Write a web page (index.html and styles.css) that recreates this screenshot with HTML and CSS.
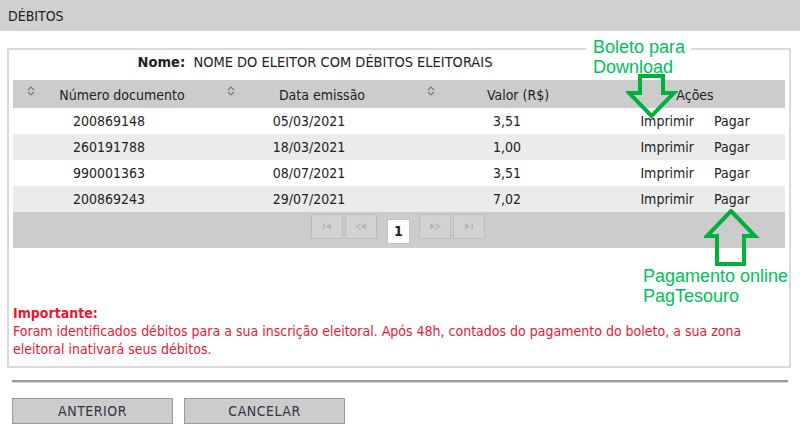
FILE: index.html
```html
<!DOCTYPE html>
<html lang="pt-BR">
<head>
<meta charset="utf-8">
<title>Débitos</title>
<link rel="stylesheet" href="styles.css">
</head>
<body>
<div class="page">
  <div class="titlebar">DÉBITOS</div>

  <div class="panel">
    <div class="nome"><b>Nome:</b>&nbsp; NOME DO ELEITOR COM DÉBITOS ELEITORAIS</div>

    <div class="grid">
      <div class="th"><span class="sort"><svg width="8" height="10" viewBox="0 0 8 10"><path d="M1 4 L4 1 L7 4 M1 6 L4 9 L7 6" fill="none" stroke="#7a7a7a" stroke-width="1.2"/></svg></span><span class="lbl">Número documento</span></div>
      <div class="th"><span class="sort"><svg width="8" height="10" viewBox="0 0 8 10"><path d="M1 4 L4 1 L7 4 M1 6 L4 9 L7 6" fill="none" stroke="#7a7a7a" stroke-width="1.2"/></svg></span><span class="lbl">Data emissão</span></div>
      <div class="th"><span class="sort"><svg width="8" height="10" viewBox="0 0 8 10"><path d="M1 4 L4 1 L7 4 M1 6 L4 9 L7 6" fill="none" stroke="#7a7a7a" stroke-width="1.2"/></svg></span><span class="lbl lbl3">Valor (R$)</span></div>
      <div class="th th-act"><span class="lbl">Ações</span></div>

      <div class="td">200869148</div><div class="td">05/03/2021</div><div class="td">3,51</div><div class="td act"><span>Imprimir</span><span>Pagar</span></div>
      <div class="td alt">260191788</div><div class="td alt">18/03/2021</div><div class="td alt">1,00</div><div class="td act alt"><span>Imprimir</span><span>Pagar</span></div>
      <div class="td">990001363</div><div class="td">08/07/2021</div><div class="td">3,51</div><div class="td act"><span>Imprimir</span><span>Pagar</span></div>
      <div class="td alt">200869243</div><div class="td alt">29/07/2021</div><div class="td alt">7,02</div><div class="td act alt"><span>Imprimir</span><span>Pagar</span></div>
    </div>

    <div class="pager">
      <span class="pbtn"><svg width="10" height="7" viewBox="0 0 10 7"><rect x="1" y="0.5" width="1.4" height="6" fill="#b4b4b4"/><path d="M9 0.5 L3.5 3.5 L9 6.5Z" fill="#b4b4b4"/></svg></span>
      <span class="pbtn"><svg width="12" height="7" viewBox="0 0 12 7"><path d="M6 0.5 L1 3.5 L6 6.5" fill="none" stroke="#b4b4b4" stroke-width="1.2"/><path d="M11 0.5 L5.5 3.5 L11 6.5Z" fill="#b4b4b4"/></svg></span>
      <span class="pnum">1</span>
      <span class="pbtn"><svg width="12" height="7" viewBox="0 0 12 7"><path d="M1 0.5 L6.5 3.5 L1 6.5Z" fill="#b4b4b4"/><path d="M6 0.5 L11 3.5 L6 6.5" fill="none" stroke="#b4b4b4" stroke-width="1.2"/></svg></span>
      <span class="pbtn"><svg width="10" height="7" viewBox="0 0 10 7"><path d="M1 0.5 L6.5 3.5 L1 6.5Z" fill="#b4b4b4"/><rect x="7.6" y="0.5" width="1.4" height="6" fill="#b4b4b4"/></svg></span>
    </div>

    <div class="aviso">
      <div class="aviso-t">Importante:</div>
      <div>Foram identificados débitos para a sua inscrição eleitoral. Após 48h, contados do pagamento do boleto, a sua zona eleitoral inativará seus débitos.</div>
    </div>

    <div class="note note-top">Boleto para<br>Download</div>
    <svg class="arrow arrow-down" width="52" height="46" viewBox="0 0 52 46"><path d="M14 2 L37 2 L37 19 L48 19 L25.5 42 L3 19 L14 19 Z" fill="none" stroke="#00b03c" stroke-width="4" stroke-linejoin="miter"/></svg>
    <svg class="arrow arrow-up" width="56" height="58" viewBox="0 0 56 58"><path d="M27 2 L51 27 L40 27 L40 55 L13 55 L13 27 L3 27 Z" fill="none" stroke="#00b03c" stroke-width="4" stroke-linejoin="miter"/></svg>
    <div class="note note-bottom">Pagamento online<br>PagTesouro</div>
  </div>

  <div class="divider"></div>

  <div class="actions">
    <button class="btn">ANTERIOR</button>
    <button class="btn">CANCELAR</button>
  </div>
</div>
</body>
</html>
```
FILE: styles.css
```css
* { box-sizing: border-box; }
html, body { margin: 0; padding: 0; background: #fff; }
body {
  font-family: "DejaVu Sans Condensed", "DejaVu Sans", sans-serif;
  font-size: 14px;
  color: #222;
  width: 800px;
  height: 442px;
  overflow: hidden;
}
.titlebar {
  height: 31px;
  line-height: 33px;
  background: #d0d0d0;
  padding-left: 8px;
  color: #222;
}
.panel {
  position: relative;
  margin: 17px 9px 0 7px;
  border: 2px solid #dadada;
  padding: 0 4px 7px 4px;
  height: 320px;
}
.nome {
  height: 30px;
  line-height: 25px;
  text-align: center;
  padding-right: 168px;
  font-size: 14.5px;
}
.grid {
  display: grid;
  grid-template-columns: 200px 200px 200px 172px;
}
.th {
  height: 28px;
  background: #cccccc;
  display: flex;
  align-items: center;
}
.sort {
  width: 10px;
  margin-left: 14px;
  align-self: flex-start;
  margin-top: 6px;
  display: flex;
}
.lbl {
  flex: 1;
  text-align: center;
  padding-right: 6px;
  padding-top: 2px;
}
.lbl3 { padding-right: 14px; }
.th-act .lbl { padding-right: 8px; }
.td {
  height: 26px;
  line-height: 27px;
  text-align: center;
  padding-right: 8px;
  background: #fff;
}
.td.alt { background: #ebebeb; }
.td:nth-child(4n+3) { padding-right: 12px; }
.act {
  display: flex;
  justify-content: center;
  gap: 20px;
  padding-right: 8px;
}
.pager {
  height: 36px;
  background: #cccccc;
  display: flex;
  justify-content: center;
  align-items: flex-start;
  padding-top: 2px;
}
.pbtn {
  width: 32px;
  height: 25px;
  border: 1px solid #bdbdbd;
  background: #d2d2d2;
  display: flex;
  align-items: center;
  justify-content: center;
  margin-right: 2px;
}
.pnum {
  width: 23px;
  height: 25px;
  margin: 5px 9px 0 8px;
  background: #fff;
  border: 1px solid #c4c4c4;
  text-align: center;
  line-height: 23px;
  font-weight: bold;
  color: #222;
}
.aviso {
  margin-top: 56px;
  color: #f01530;
  line-height: 18px;
}
.aviso-t { font-weight: bold; }
.note {
  position: absolute;
  font-family: "Liberation Sans", Arial, sans-serif;
  font-size: 18px;
  line-height: 20px;
  color: #00c158;
  background: #fff;
}
.note-top {
  left: 577px;
  top: -13px;
  padding: 0 6px 0 7px;
}
.arrow { position: absolute; }
.arrow-down { left: 617px; top: 24px; }
.arrow-up { left: 695px; top: 159px; }
.note-bottom {
  left: 634px;
  top: 216px;
  background: transparent;
}
.divider {
  margin: 12px 12px 0 12px;
  border-top: 2px solid #9c9c9c;
  border-bottom: 1px solid #d8d8d8;
}
.actions {
  display: flex;
  gap: 11px;
  margin: 15px 0 0 12px;
}
.btn {
  width: 161px;
  height: 26px;
  background: #cccccc;
  border: 1px solid #9a9a9a;
  font-family: "DejaVu Sans Condensed", "DejaVu Sans", sans-serif;
  font-size: 14px;
  letter-spacing: 0.5px;
  color: #334;
  padding: 0;
}
```
